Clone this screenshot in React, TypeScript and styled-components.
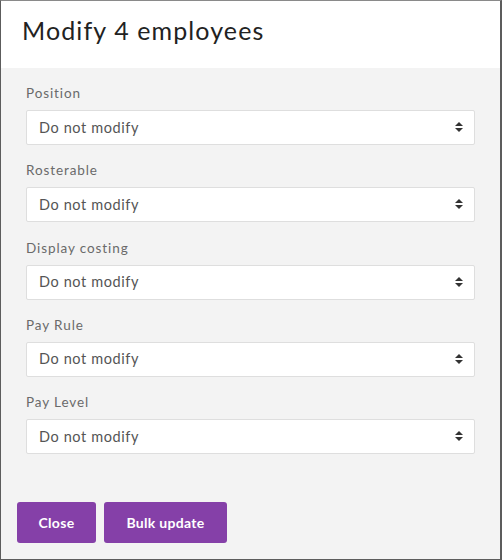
import React from "react";
import styled, { createGlobalStyle } from "styled-components";

const Global = createGlobalStyle`
  html, body { margin: 0; padding: 0; }
  body { font-family: "Lato", "Noto Sans", sans-serif; background: #fff; }
  * { box-sizing: border-box; }
`;

const Dialog = styled.div`
  width: 502px;
  height: 560px;
  border-left: 1px solid #5c5c5c;
  border-right: 2px solid #5c5c5c;
  border-bottom: 1px solid #5c5c5c;
  border-top: 1px solid #8a8a8a;
  background: #f3f3f3;
  display: flex;
  flex-direction: column;
`;

const Header = styled.div`
  height: 67px;
  background: #fff;
  padding: 14px 0 0 21px;
`;

const Title = styled.h1`
  margin: 0;
  font-family: "Lato", "Noto Sans", sans-serif;
  font-weight: 400;
  font-size: 25px;
  letter-spacing: 1.1px;
  color: #222;
`;

const Body = styled.div`
  flex: 1;
  padding: 16px 25px 0 25px;
  display: flex;
  flex-direction: column;
  gap: 16.3px;
`;

const Field = styled.div`
  display: flex;
  flex-direction: column;
`;

const Label = styled.label`
  font-size: 13.5px;
  color: #6a6a6a;
  letter-spacing: 0.9px;
  height: 26px;
  line-height: 18px;
`;

const SelectBox = styled.div`
  height: 35px;
  background: #fff;
  border: 1px solid #dedede;
  border-radius: 2px;
  display: flex;
  align-items: center;
  justify-content: space-between;
  padding: 0 10px 1px 12px;
  font-size: 14.5px;
  color: #555;
  letter-spacing: 0.6px;
`;

const Footer = styled.div`
  padding: 0 0 16px 16px;
  display: flex;
  gap: 8px;
`;

const Button = styled.button<{ $w: number }>`
  height: 41px;
  padding: 0;
  width: ${(p) => p.$w}px;
  background: #8540a8;
  border: none;
  border-radius: 3px;
  color: #fff;
  font-family: "Lato", "Noto Sans", sans-serif;
  font-size: 14px;
  font-weight: 700;
  letter-spacing: 0.3px;
`;

const SortIcon = () => (
  <svg width="10" height="12" viewBox="0 0 10 12">
    <path d="M1 5 L5 1 L9 5 Z" fill="#333" />
    <path d="M1 7 L5 11 L9 7 Z" fill="#333" />
  </svg>
);

const fields = ["Position", "Rosterable", "Display costing", "Pay Rule", "Pay Level"];

export default function App() {
  return (
    <>
      <Global />
      <Dialog>
        <Header>
          <Title>Modify 4 employees</Title>
        </Header>
        <Body>
          {fields.map((f) => (
            <Field key={f}>
              <Label>{f}</Label>
              <SelectBox>
                <span>Do not modify</span>
                <SortIcon />
              </SelectBox>
            </Field>
          ))}
        </Body>
        <Footer>
          <Button $w={79}>Close</Button>
          <Button $w={123}>Bulk update</Button>
        </Footer>
      </Dialog>
    </>
  );
}
